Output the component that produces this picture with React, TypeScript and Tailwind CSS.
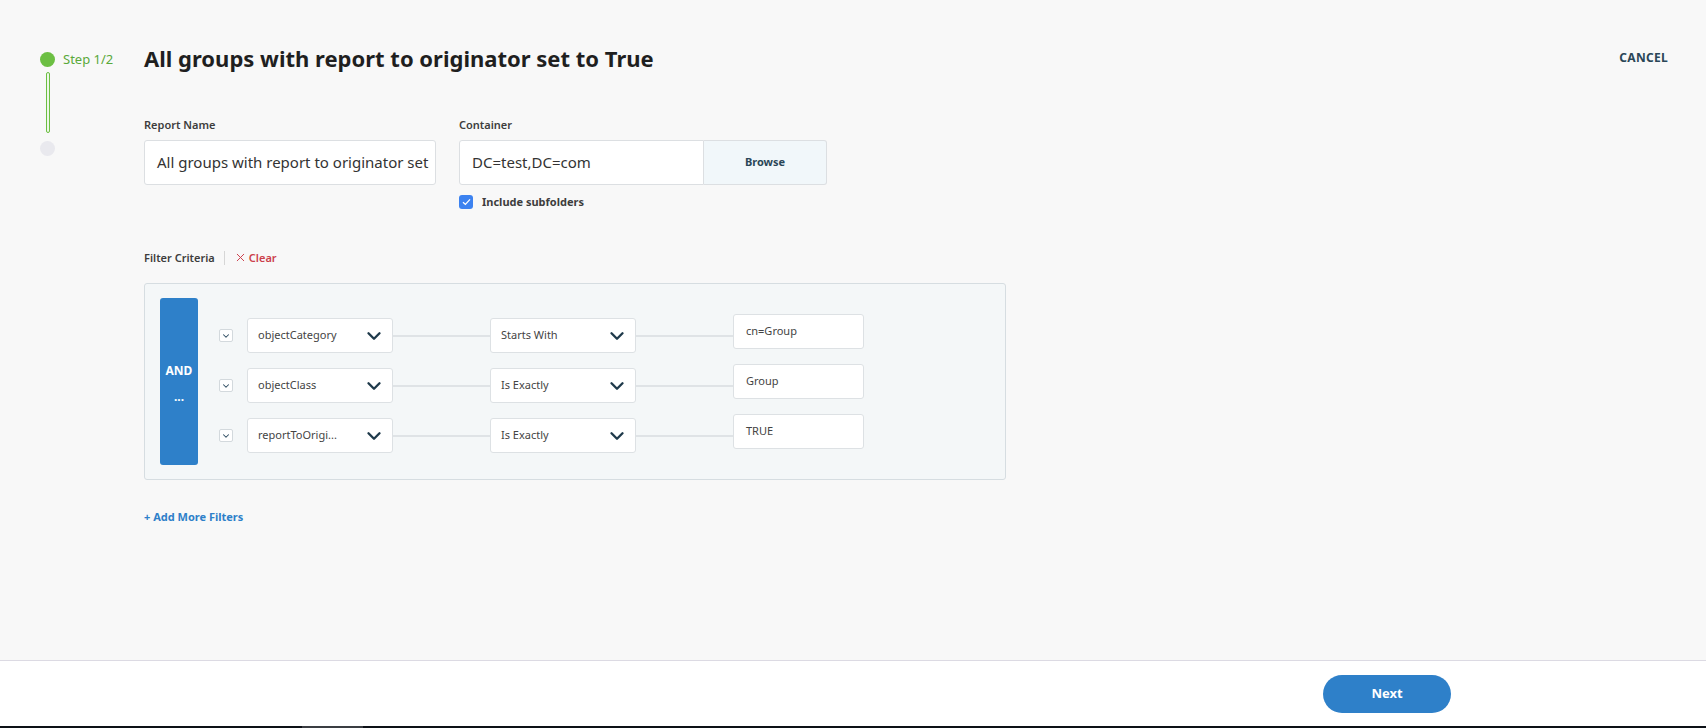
import React from "react"
import { ChevronDown, X } from "lucide-react"

const rows = [
  { field: "objectCategory", op: "Starts With", value: "cn=Group" },
  { field: "objectClass", op: "Is Exactly", value: "Group" },
  { field: "reportToOrigi...", op: "Is Exactly", value: "TRUE" },
]

const Select = ({ label }: { label: string }) => {
  return (
    <div className="w-[146px] h-[35px] bg-white border border-[#dde1e4] rounded-[3px] flex items-center justify-between pl-[10px] pr-[7px]">
      <span className="text-[11px] text-[#444]">{label}</span>
      <ChevronDown size={22} strokeWidth={2.6} className="text-[#1f3a4b]" />
    </div>
  )
}

const FilterRow = ({ field, op, value }: { field: string; op: string; value: string }) => {
  return (
    <div className="flex items-center h-[35px]">
      <div className="w-[14px] h-[13px] bg-white border border-[#d3d9dd] rounded-[2px] flex items-center justify-center">
        <ChevronDown size={10} strokeWidth={2.5} className="text-[#2b4a5f]" />
      </div>
      <div className="ml-[14px]">
        <Select label={field} />
      </div>
      <div className="w-[97px] h-[2px] bg-[#dfe3e6]" />
      <Select label={op} />
      <div className="w-[97px] h-[2px] bg-[#dfe3e6]" />
      <div className="w-[131px] h-[35px] mb-[8px] bg-white border border-[#dde1e4] rounded-[3px] flex items-center pl-[12px]">
        <span className="text-[11px] text-[#444]">{value}</span>
      </div>
    </div>
  )
}

const App = () => {
  return (
    <div
      className="h-[728px] w-full flex flex-col bg-[#f8f8f8] overflow-hidden"
      style={{ fontFamily: '"Noto Sans", "Open Sans", sans-serif' }}
    >
      <div className="flex-1 flex pt-[44px] pl-[40px] pr-[38px]">
        {/* stepper */}
        <div className="w-[104px] flex pt-[8px]">
          <div className="flex flex-col items-center w-[15px]">
            <div className="w-[15px] h-[15px] rounded-full bg-[#6cbf43]" />
            <div className="mt-[5px] w-[4px] h-[61px] rounded-full border border-[#6cbf43] bg-[#eef7e9]" />
            <div className="mt-[8px] w-[15px] h-[15px] rounded-full bg-[#e9e9ee]" />
          </div>
          <span className="ml-[8px] text-[13px] leading-[15px] text-[#5aa93a]">Step 1/2</span>
        </div>

        <div className="flex-1 flex flex-col">
          <div className="flex items-center justify-between">
            <h1 className="text-[22px] leading-[28px] font-bold text-[#1f1f1f]">
              All groups with report to originator set to True
            </h1>
            <span className="text-[12px] font-bold text-[#2a4657] tracking-[0.3px]">CANCEL</span>
          </div>

          <div className="mt-[46px] flex gap-[23px]">
            <div className="flex flex-col">
              <label className="text-[11px] leading-[14px] font-semibold text-[#3d3d3d]">Report Name</label>
              <div className="mt-[8px] w-[292px] h-[45px] bg-white border border-[#dcdfe2] rounded-[3px] flex items-center pl-[12px] overflow-hidden">
                <span className="text-[15px] text-[#333] whitespace-nowrap">All groups with report to originator set</span>
              </div>
            </div>
            <div className="flex flex-col">
              <label className="text-[11px] leading-[14px] font-semibold text-[#3d3d3d]">Container</label>
              <div className="mt-[8px] flex h-[45px]">
                <div className="w-[245px] bg-white border border-[#dcdfe2] rounded-l-[3px] flex items-center pl-[12px]">
                  <span className="text-[15px] text-[#333]">DC=test,DC=com</span>
                </div>
                <div className="w-[123px] bg-[#f1f7fa] border border-l-0 border-[#dcdfe2] rounded-r-[3px] flex items-center justify-center">
                  <span className="text-[11px] font-bold text-[#2a4657]">Browse</span>
                </div>
              </div>
              <div className="mt-[9px] flex items-center">
                <div className="w-[14px] h-[14px] rounded-[3px] bg-[#3c82f0] flex items-center justify-center">
                  <svg width="9" height="8" viewBox="0 0 9 8" fill="none">
                    <path d="M1 4.2 L3.4 6.4 L8 1.4" stroke="white" strokeWidth="1.3" />
                  </svg>
                </div>
                <span className="ml-[9px] text-[11px] font-bold text-[#3d3d3d]">Include subfolders</span>
              </div>
            </div>
          </div>

          <div className="mt-[39px] flex items-center">
            <span className="text-[11px] leading-[14px] font-semibold text-[#3d3d3d]">Filter Criteria</span>
            <div className="ml-[9px] w-px h-[14px] bg-[#d6d6d6]" />
            <X size={13} strokeWidth={1.8} className="ml-[9px] text-[#cc3f4b]" />
            <span className="ml-[2px] text-[11px] font-semibold text-[#cc3f4b]">Clear</span>
          </div>

          <div className="mt-[17px] w-[862px] h-[197px] bg-[#f4f7f8] border border-[#d6dde1] rounded-[3px] flex pt-[14px] pl-[15px]">
            <div className="w-[38px] h-[167px] bg-[#2e80c9] rounded-[3px] flex flex-col items-center justify-center">
              <span className="text-[12px] font-bold text-white">AND</span>
              <span className="mt-[12px] text-[12px] font-bold text-white leading-[10px]">...</span>
            </div>
            <div className="ml-[21px] pt-[20px] flex flex-col gap-[15px]">
              {rows.map((r) => (
                <FilterRow key={r.field} field={r.field} op={r.op} value={r.value} />
              ))}
            </div>
          </div>

          <div className="mt-[23px]">
            <span className="text-[11px] font-bold text-[#2e80c9]">+ Add More Filters</span>
          </div>
        </div>
      </div>

      <div className="h-[68px] bg-white border-t border-[#dcdae3] flex flex-col">
        <div className="flex-1 flex justify-end pr-[255px] pt-[14px]">
          <button className="w-[128px] h-[38px] rounded-full bg-[#2e80c9] text-white text-[13px] font-bold">
            Next
          </button>
        </div>
        <div className="h-[2px] flex bg-[#0d1117]">
          <div className="ml-[302px] w-[61px] bg-[#3a3d42]" />
        </div>
      </div>
    </div>
  )
}

export default App
